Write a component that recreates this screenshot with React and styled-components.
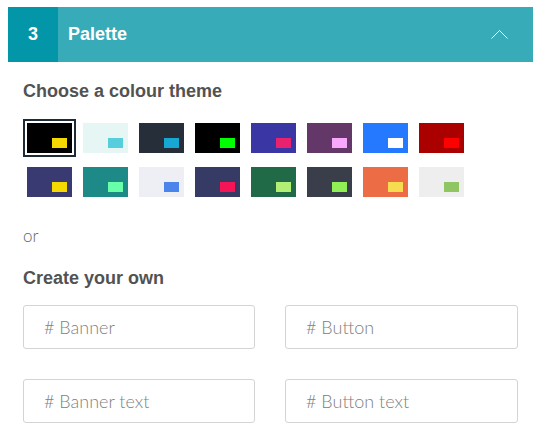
import { useState } from "react";
import styled, { createGlobalStyle } from "styled-components";

const themes = [
  { bg: "#000000", accent: "#f5d800" },
  { bg: "#e6f6f5", accent: "#56cedc" },
  { bg: "#262e3a", accent: "#16a8d2" },
  { bg: "#000000", accent: "#00ff00" },
  { bg: "#3a36a3", accent: "#e8226f" },
  { bg: "#633868", accent: "#f9a7fc" },
  { bg: "#2579fe", accent: "#ffffff" },
  { bg: "#aa0000", accent: "#ff0000" },
  { bg: "#3a3a73", accent: "#f5d800" },
  { bg: "#1d8a87", accent: "#67ffa8" },
  { bg: "#eeeef5", accent: "#4b84ea" },
  { bg: "#353b64", accent: "#f51556" },
  { bg: "#216a47", accent: "#b2f075" },
  { bg: "#3a3e4b", accent: "#8fef54" },
  { bg: "#ec6c46", accent: "#f7dc4f" },
  { bg: "#eeeeee", accent: "#8fc661" },
];

const fields = ["# Banner", "# Button", "# Banner text", "# Button text"];

const GlobalStyle = createGlobalStyle`
  body {
    margin: 0;
    background: #fff;
    font-family: "Liberation Sans", Arial, sans-serif;
  }
`;

const Panel = styled.section`
  margin: 7px 0 0 8px;
  width: 525px;
`;

const Header = styled.header`
  display: flex;
  align-items: center;
  height: 55px;
  background: #37abb8;
  color: #fff;
  font-weight: bold;
  font-size: 18px;
  padding-right: 25px;
`;

const Step = styled.div`
  width: 50px;
  height: 100%;
  display: flex;
  align-items: center;
  justify-content: center;
  background: #0396a9;
`;

const Title = styled.h2`
  flex: 1;
  margin: 0 0 0 10px;
  font-size: 18px;
`;

const Body = styled.div`
  padding: 19px 15px 0;
`;

const Heading = styled.h3`
  margin: ${(p) => p.$top || 0}px 0 0;
  font-size: 18px;
  line-height: 21px;
  color: #525252;
`;

const Swatches = styled.div`
  display: grid;
  grid-template-columns: repeat(8, 45px);
  column-gap: 11px;
  row-gap: 14px;
  margin-top: 21px;
  padding-left: 4px;
`;

const Swatch = styled.button`
  position: relative;
  width: 45px;
  height: 30px;
  padding: 0;
  border: none;
  cursor: pointer;
  background: ${(p) => p.$bg};
  outline: ${(p) => (p.$active ? "2px solid #1d2b36" : "none")};
  outline-offset: 2px;

  span {
    position: absolute;
    right: 5px;
    bottom: 5px;
    width: 15px;
    height: 10px;
    background: ${(p) => p.$accent};
  }
`;

const Or = styled.p`
  margin: 29px 0 0;
  font-family: Lato, sans-serif;
  font-weight: 300;
  font-size: 17px;
  line-height: 20px;
  color: #666;
`;

const Fields = styled.div`
  display: grid;
  grid-template-columns: 232px 233px;
  column-gap: 30px;
  row-gap: 30px;
  margin-top: 16px;
`;

const Input = styled.input`
  box-sizing: border-box;
  width: 100%;
  height: 44px;
  padding: 0 0 0 20px;
  border: 1px solid #d4d4d4;
  border-radius: 3px;
  font-family: Lato, sans-serif;
  font-weight: 300;
  font-size: 18px;
  color: #444;

  &::placeholder {
    color: #808080;
  }
`;

const Chevron = () => (
  <svg width="17" height="9" viewBox="0 0 17 9">
    <polyline points="0.5,8.5 8.5,0.5 16.5,8.5" fill="none" stroke="#fff" strokeWidth="1" />
  </svg>
);

export default function App() {
  const [active, setActive] = useState(0);
  return (
    <>
      <GlobalStyle />
      <Panel>
        <Header>
          <Step>3</Step>
          <Title>Palette</Title>
          <Chevron />
        </Header>
        <Body>
          <Heading>Choose a colour theme</Heading>
          <Swatches>
            {themes.map((t, i) => (
              <Swatch
                key={i}
                $bg={t.bg}
                $accent={t.accent}
                $active={i === active}
                onClick={() => setActive(i)}
              >
                <span />
              </Swatch>
            ))}
          </Swatches>
          <Or>or</Or>
          <Heading $top={22}>Create your own</Heading>
          <Fields>
            {fields.map((f) => (
              <Input key={f} placeholder={f} />
            ))}
          </Fields>
        </Body>
      </Panel>
    </>
  );
}
